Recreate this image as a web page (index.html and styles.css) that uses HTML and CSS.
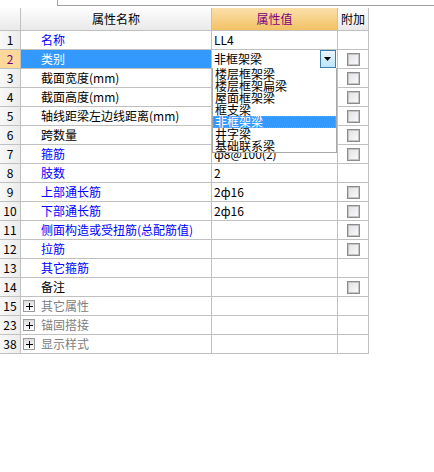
FILE: index.html
```html
<!DOCTYPE html>
<html lang="zh">
<head>
<meta charset="utf-8">
<link rel="stylesheet" href="styles.css">
</head>
<body>
<div class="frame"></div>
<div class="grid">
  <div class="hd corner"></div>
  <div class="hd">属性名称</div>
  <div class="hd hd-val">属性值</div>
  <div class="hd">附加</div>

  <div class="num">1</div><div class="name blue">名称</div><div class="val">LL4</div><div class="ext"></div>

  <div class="num num-sel">2</div><div class="name sel">类别</div>
  <div class="val combo">
    <span>非框架梁</span>
    <span class="drop-btn"><svg width="8" height="5" viewBox="0 0 8 5"><path d="M0 0H7L3.5 4Z" fill="#000"/></svg></span>
    <ul class="list">
      <li>楼层框架梁</li>
      <li>楼层框架扁梁</li>
      <li>屋面框架梁</li>
      <li>框支梁</li>
      <li class="cur">非框架梁</li>
      <li>井字梁</li>
      <li>基础联系梁</li>
    </ul>
  </div>
  <div class="ext"><span class="cb"></span></div>

  <div class="num">3</div><div class="name">截面宽度(mm)</div><div class="val"></div><div class="ext"><span class="cb"></span></div>
  <div class="num">4</div><div class="name">截面高度(mm)</div><div class="val"></div><div class="ext"><span class="cb"></span></div>
  <div class="num">5</div><div class="name">轴线距梁左边线距离(mm)</div><div class="val"></div><div class="ext"><span class="cb"></span></div>
  <div class="num">6</div><div class="name">跨数量</div><div class="val"></div><div class="ext"><span class="cb"></span></div>
  <div class="num">7</div><div class="name blue">箍筋</div><div class="val">ф8@100(2)</div><div class="ext"><span class="cb"></span></div>
  <div class="num">8</div><div class="name blue">肢数</div><div class="val">2</div><div class="ext"></div>
  <div class="num">9</div><div class="name blue">上部通长筋</div><div class="val">2ф16</div><div class="ext"><span class="cb"></span></div>
  <div class="num">10</div><div class="name blue">下部通长筋</div><div class="val">2ф16</div><div class="ext"><span class="cb"></span></div>
  <div class="num">11</div><div class="name blue">侧面构造或受扭筋(总配筋值)</div><div class="val"></div><div class="ext"><span class="cb"></span></div>
  <div class="num">12</div><div class="name blue">拉筋</div><div class="val"></div><div class="ext"><span class="cb"></span></div>
  <div class="num">13</div><div class="name blue">其它箍筋</div><div class="val"></div><div class="ext"></div>
  <div class="num">14</div><div class="name">备注</div><div class="val"></div><div class="ext"><span class="cb"></span></div>

  <div class="num">15</div><div class="name group"><span class="plus"></span>其它属性</div><div class="val"></div><div class="ext"></div>
  <div class="num">23</div><div class="name group"><span class="plus"></span>锚固搭接</div><div class="val"></div><div class="ext"></div>
  <div class="num">38</div><div class="name group"><span class="plus"></span>显示样式</div><div class="val"></div><div class="ext"></div>
</div>
</body>
</html>
```

FILE: styles.css
```css
html, body {
  margin: 0;
  padding: 0;
  background: #fff;
}
body {
  font-family: "Noto Sans CJK SC", "DejaVu Sans", sans-serif;
  font-size: 12px;
  color: #000;
}
.frame {
  margin-left: 57px;
  height: 5px;
  border-left: 1px solid #a0a0a0;
  border-bottom: 1px solid #a0a0a0;
  margin-bottom: 2px;
}
.grid {
  display: grid;
  grid-template-columns: 20px 190px 125px 30px;
  grid-template-rows: 22px;
  grid-auto-rows: 18px;
  gap: 1px;
  width: 368px;
  padding: 0 1px 1px 0;
  background: #c0c0c0;
}
.grid > div {
  background: #fff;
  line-height: 18px;
  white-space: nowrap;
  overflow: visible;
}
.grid > .hd {
  line-height: 22px;
  text-align: center;
  background: linear-gradient(#fdfdfd, #e9e9e9);
}
.grid > .hd-val {
  background: linear-gradient(#fbe0ab, #f2c164);
  color: #800080;
}
.grid > .num {
  background: linear-gradient(90deg, #f8f8f8, #ececec);
  text-align: center;
  font-size: 12px;
}
.grid > .num-sel {
  background: #fcd89b;
  color: #800080;
}
.grid > .name {
  padding-left: 20px;
}
.grid > .sel {
  background: #3399ff;
  color: #fff;
}
.blue {
  color: #0000ff;
}
.grid > .group {
  padding-left: 2px;
  color: #808080;
  display: flex;
  align-items: center;
  gap: 6px;
}
.plus {
  width: 10px;
  height: 10px;
  border: 1px solid #9a9a9a;
  background:
    linear-gradient(#000, #000) center / 7px 1px no-repeat,
    linear-gradient(#000, #000) center / 1px 7px no-repeat,
    linear-gradient(#dcdcdc, #ffffff);
  flex: none;
}
.grid > .val {
  padding-left: 2px;
}
.grid > .combo {
  position: relative;
  display: flex;
  align-items: center;
  justify-content: space-between;
  z-index: 2;
}
.drop-btn {
  width: 14px;
  height: 16px;
  margin-right: 1px;
  border: 1px solid #3c7fb1;
  background: linear-gradient(#eaf6fd, #bde6fd);
  display: flex;
  align-items: center;
  justify-content: center;
  box-sizing: content-box;
}
.list {
  position: absolute;
  left: 0;
  top: 18px;
  width: 123px;
  margin: 0;
  padding: 0;
  list-style: none;
  background: #fff;
  border: 1px solid #a8a8a8;
  border-top: none;
}
.list li {
  height: 12px;
  line-height: 12px;
  font-size: 12px;
  padding-left: 2px;
  overflow: visible;
  white-space: nowrap;
}
.list li.cur {
  background: #3399ff;
  color: #fff;
  outline: 1px dotted #f08c28;
  outline-offset: -1px;
}
.grid > .ext {
  display: flex;
  align-items: center;
  justify-content: center;
}
.cb {
  width: 11px;
  height: 11px;
  border: 1px solid #8c8c8c;
  box-shadow: inset 0 0 0 1px #c4c4c4;
  background: linear-gradient(135deg, #dfe1e5, #fbfbfb);
}
```
